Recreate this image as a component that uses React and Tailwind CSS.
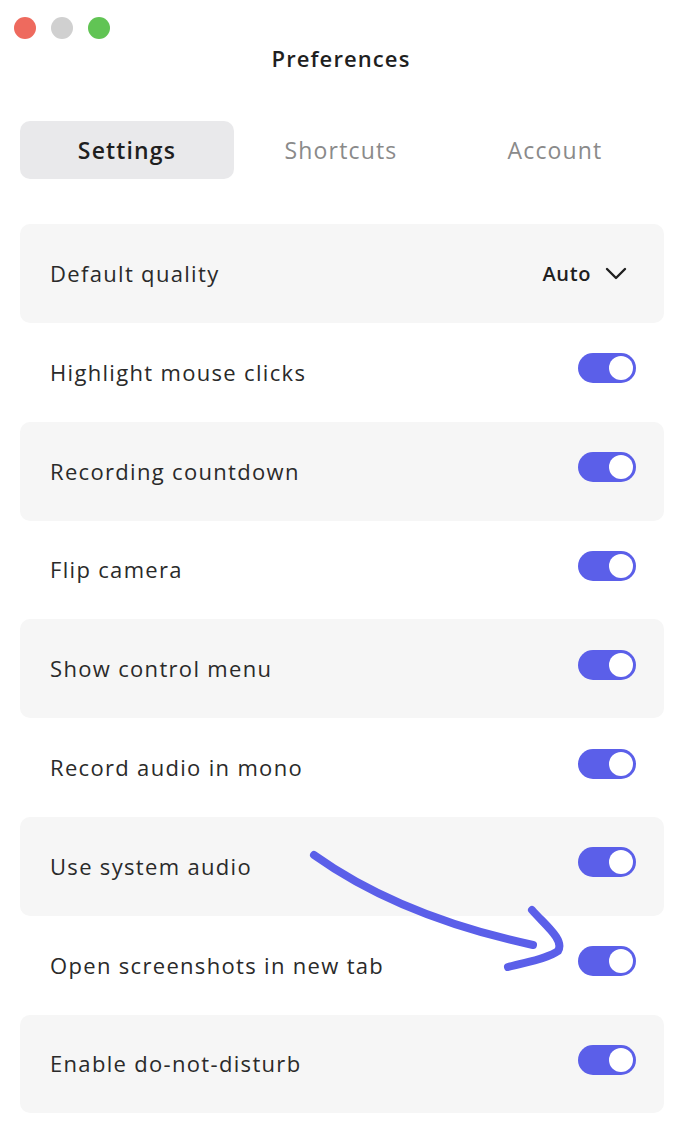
import React, { useState } from 'react';

const ROWS = [
    'Highlight mouse clicks',
    'Recording countdown',
    'Flip camera',
    'Show control menu',
    'Record audio in mono',
    'Use system audio',
    'Open screenshots in new tab',
    'Enable do-not-disturb',
];

function Toggle({ on, onClick }) {
    return (
        <button
            onClick={onClick}
            className={`w-[58px] h-[30px] rounded-full p-[3px] flex items-center -mt-[8px] ${on ? 'bg-[#5b5fe9] justify-end' : 'bg-[#d4d4d8] justify-start'}`}
        >
            <span className="w-[24px] h-[24px] rounded-full bg-white" />
        </button>
    );
}

function Arrow() {
    return (
        <svg className="absolute left-0 top-0 pointer-events-none" width="682" height="1136" viewBox="0 0 682 1136">
            <g fill="none" stroke="#5b5fe9" strokeWidth="8" strokeLinecap="round" strokeLinejoin="round">
                <path d="M314 855 C 370 895, 440 925, 533 945" />
                <path d="M532 910 C 545 925, 565 940, 558 951 C 545 960, 525 962, 508 967" />
            </g>
        </svg>
    );
}

export default function App() {
    const [tab, setTab] = useState('Settings');
    const [values, setValues] = useState(ROWS.map(() => true));

    return (
        <div className="relative w-[682px] h-[1136px] bg-white overflow-hidden" style={{ fontFamily: '"Open Sans", "Noto Sans", sans-serif' }}>
            {/* title bar */}
            <div className="flex gap-[15px] pl-[14px] pt-[17px]">
                <span className="w-[22px] h-[22px] rounded-full bg-[#ee6a5e]" />
                <span className="w-[22px] h-[22px] rounded-full bg-[#d0d0d0]" />
                <span className="w-[22px] h-[22px] rounded-full bg-[#61c454]" />
            </div>
            <h1 className="text-center text-[22px] font-semibold tracking-[0.05em] text-[#1f1f1f] leading-none mt-[8px]">Preferences</h1>

            {/* tabs */}
            <div className="grid grid-cols-3 mx-[20px] mt-[52px]">
                {['Settings', 'Shortcuts', 'Account'].map(t => (
                    <button
                        key={t}
                        onClick={() => setTab(t)}
                        className={`h-[58px] rounded-[10px] text-[23px] tracking-[0.05em] ${tab === t ? 'bg-[#e9e9eb] text-[#1f1f1f] font-semibold' : 'text-[#8a8a8a] font-medium'}`}
                    >
                        {t}
                    </button>
                ))}
            </div>

            {/* settings list */}
            <div className="mx-[20px] mt-[45px] w-[644px]">
                <div className="h-[99px] rounded-[10px] bg-[#f6f6f6] flex items-center justify-between pl-[30px] pr-[37px]">
                    <span className="text-[22px] tracking-[0.06em] text-[#2a2a2a]">Default quality</span>
                    <span className="flex items-center gap-[14px] text-[20px] font-semibold tracking-[0.03em] text-[#1f1f1f]">
                        Auto
                        <svg width="22" height="13" viewBox="0 0 22 13" fill="none" stroke="#1f1f1f" strokeWidth="2.4" strokeLinecap="round" strokeLinejoin="round">
                            <path d="M2 2 L11 11 L20 2" />
                        </svg>
                    </span>
                </div>
                {ROWS.map((label, i) => (
                    <div
                        key={label}
                        className={`h-[98.8px] rounded-[10px] flex items-center justify-between pl-[30px] pr-[28px] ${i % 2 === 1 ? 'bg-[#f6f6f6]' : 'bg-white'}`}
                    >
                        <span className="text-[22px] tracking-[0.06em] text-[#2a2a2a]">{label}</span>
                        <Toggle
                            on={values[i]}
                            onClick={() => setValues(v => v.map((x, j) => (j === i ? !x : x)))}
                        />
                    </div>
                ))}
            </div>

            <Arrow />
        </div>
    );
}
